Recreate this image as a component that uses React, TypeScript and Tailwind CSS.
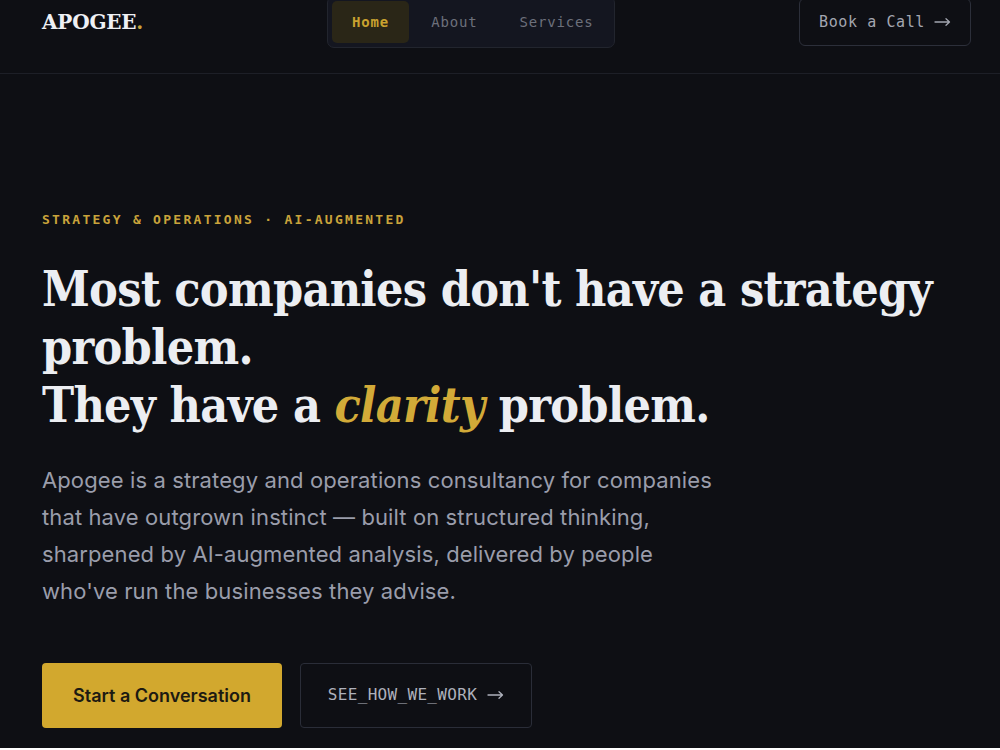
const mono = "font-['DejaVu_Sans_Mono','Liberation_Mono',monospace]";
const serif = "font-['DejaVu_Serif','Liberation_Serif',serif]";
const headSerif = "font-['DejaVu_Serif_Condensed','DejaVu_Serif',serif] font-stretch-condensed";

function Arrow() {
  return (
    <svg width="17" height="10" viewBox="0 0 17 10" fill="none" stroke="currentColor" strokeWidth="1.3" strokeLinecap="round" strokeLinejoin="round">
      <path d="M1 5h14.5M12 1.8 15.5 5 12 8.2" />
    </svg>
  );
}

function Header() {
  return (
    <header className="h-[76px] border-b border-[#1d1f27]">
      <div className="-mt-[2px] flex h-[48px] items-center justify-between pl-[42px] pr-[29px]">
        <a className={`${serif} text-[20px] font-bold tracking-[-0.01em] text-[#eef0f4]`}>
          APOGEE<span className="text-[#c9a33a]">.</span>
        </a>

        <nav className="flex h-[52px] w-[288px] items-center gap-[2px] rounded-[7px] border border-[#22252e] bg-[#141620] p-[4px]">
          <a className={`${mono} flex h-[42px] items-center rounded-[5px] bg-[#2a2617] px-[20px] text-[14px] font-bold tracking-[0.06em] text-[#c9a22f]`}>
            Home
          </a>
          <a className={`${mono} flex h-[42px] items-center px-[20px] text-[14px] tracking-[0.06em] text-[#6d707b]`}>
            About
          </a>
          <a className={`${mono} flex h-[42px] items-center px-[20px] text-[14px] tracking-[0.06em] text-[#6d707b]`}>
            Services
          </a>
        </nav>

        <button className={`${mono} flex h-[48px] w-[172px] items-center justify-center gap-[9px] rounded-[6px] border border-[#2c2f3a] text-[15px] tracking-[0.04em] text-[#a3a6b0]`}>
          Book a Call <Arrow />
        </button>
      </div>
    </header>
  );
}

export default function App() {
  return (
    <div className="min-h-[750px] w-full bg-[#0e0f14] font-['Inter',sans-serif]">
      <Header />

      <main className="pl-[42px] pr-[29px] pt-[136px]">
        <p className={`${mono} text-[13px] font-bold tracking-[0.175em] text-[#c9a33b]`}>
          STRATEGY &amp; OPERATIONS · AI-AUGMENTED
        </p>

        <h1 className={`${headSerif} mt-[30px] text-[48px] font-bold leading-[58px] tracking-[-0.015em] text-[#eceef2]`}>
          Most companies don't have a strategy problem.
          <br />
          They have a <em className="italic text-[#d2aa38]">clarity</em> problem.
        </h1>

        <p className="mt-[28px] max-w-[684px] text-[22px] leading-[37px] tracking-[0.005em] text-[#9a9dab]">
          Apogee is a strategy and operations consultancy for companies that have outgrown instinct — built on structured thinking, sharpened by AI-augmented analysis, delivered by people who've run the businesses they advise.
        </p>

        <div className="mt-[53px] flex gap-[18px]">
          <button className="flex h-[65px] w-[240px] items-center justify-center rounded-[4px] bg-[#d2a82e] text-[18px] font-semibold text-[#1c1a12]">
            Start a Conversation
          </button>
          <button className={`${mono} flex h-[65px] w-[232px] items-center justify-center gap-[10px] rounded-[4px] border border-[#2a2d38] text-[16px] tracking-[0.02em] text-[#aeb1bc]`}>
            SEE_HOW_WE_WORK <Arrow />
          </button>
        </div>
      </main>
    </div>
  );
}
